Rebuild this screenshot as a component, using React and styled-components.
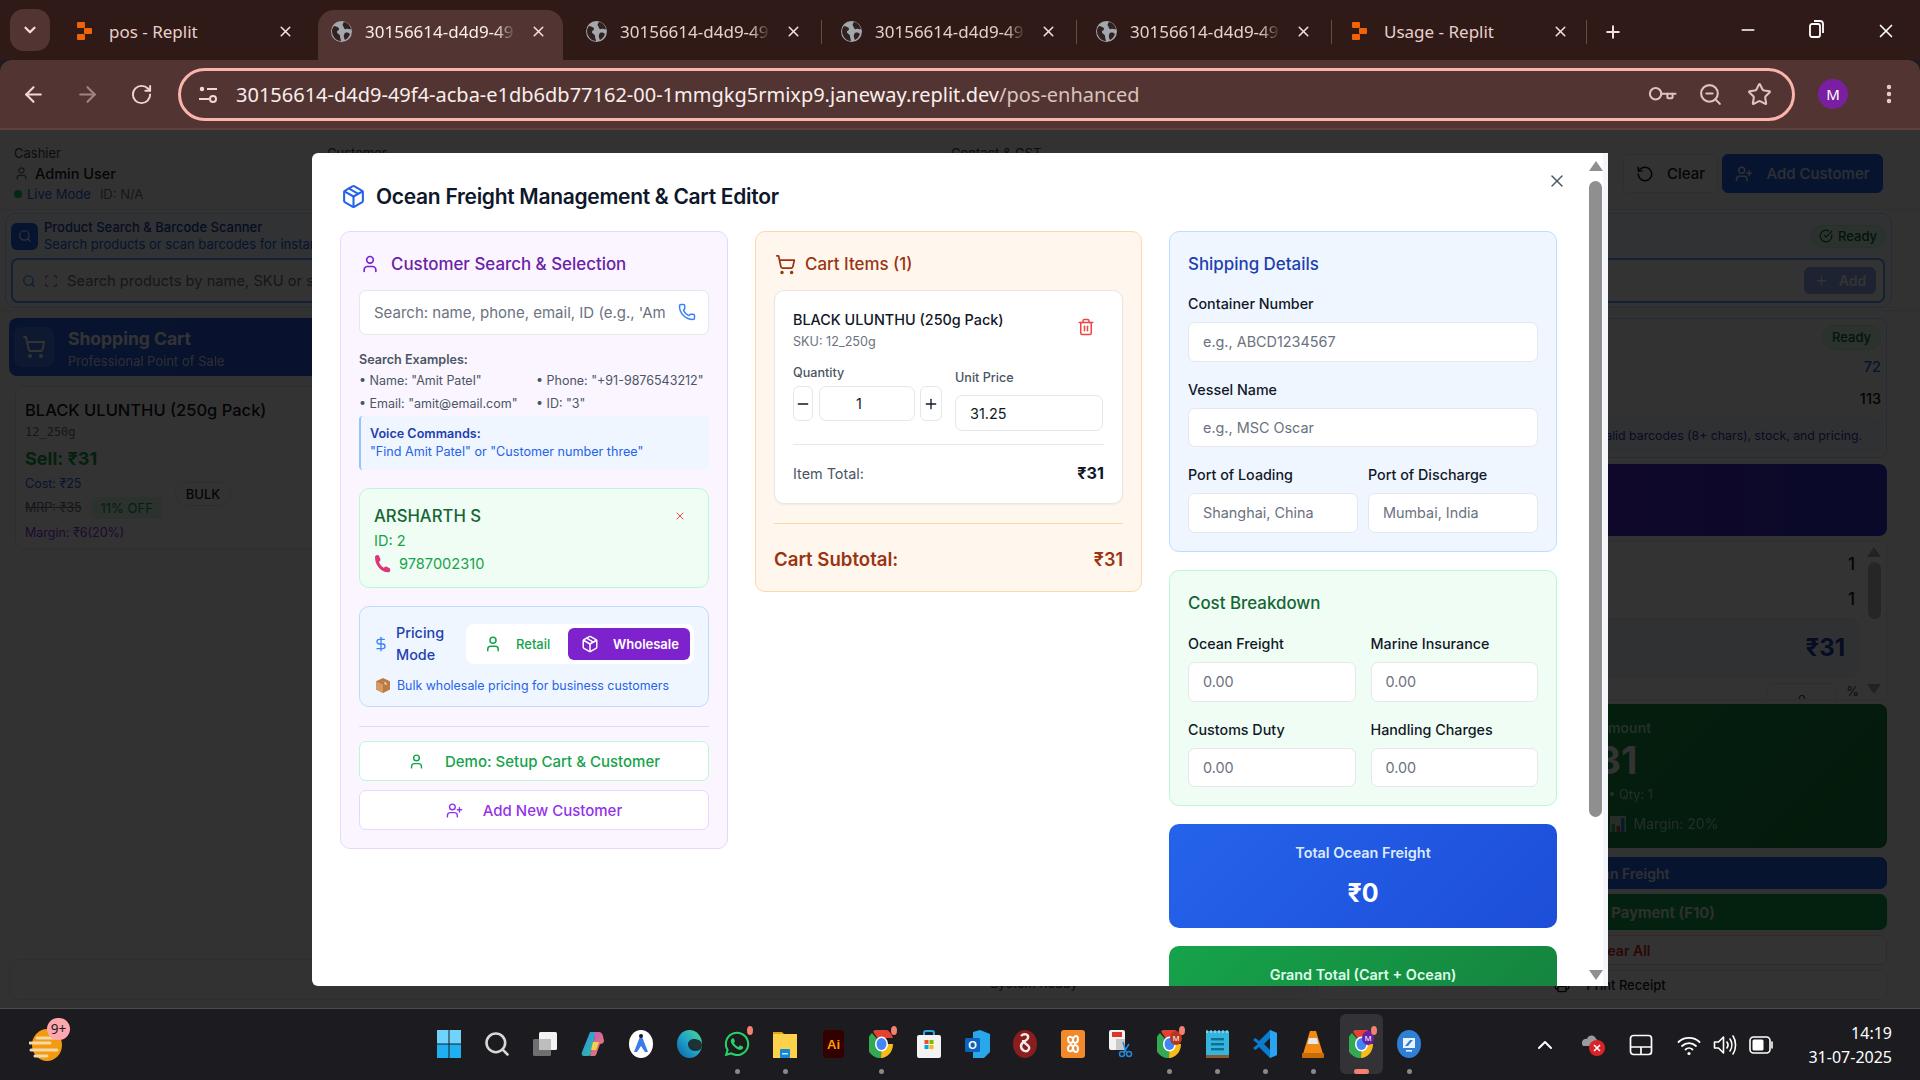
import React from 'react'
import styled, { createGlobalStyle } from 'styled-components'
import {
  ArrowLeft, ArrowRight, ChevronDown, CircleCheckBig, CreditCard, DollarSign, Key, Minus, MoreVertical, Package,
  Phone, Plus, Printer, RotateCcw, RotateCw, Scan, Search, ShoppingCart, Star, Trash2, User, UserPlus, X, ZoomOut,
} from 'lucide-react'
import { FaWhatsapp } from 'react-icons/fa'

const GlobalStyle = createGlobalStyle`
  html, body { margin: 0; padding: 0; width: 1920px; height: 1080px; overflow: hidden; background: #1c1b20; }
  * { box-sizing: border-box; }
  body { font-family: Inter, "Liberation Sans", sans-serif; }
`

const tones = {
  purple: { bg: '#faf5ff', border: '#e9d5ff', title: '#6b21a8' },
  orange: { bg: '#fff7ed', border: '#fed7aa', title: '#9a3412' },
  blue: { bg: '#eff6ff', border: '#bfdbfe', title: '#1e40af' },
  green: { bg: '#f0fdf4', border: '#bbf7d0', title: '#166534' },
}

const Screen = styled.div`
  width: 1920px;
  height: 1080px;
  display: flex;
  flex-direction: column;
`

/* ---------- browser chrome ---------- */
const TabStrip = styled.div`
  height: 60px;
  flex: none;
  background: #2f1a17;
  display: flex;
  align-items: flex-end;
  padding-left: 10px;
  font-family: "Noto Sans", "Open Sans", sans-serif;
`
const TabSearch = styled.div`
  width: 40px;
  height: 42px;
  margin: 0 13px 9px 0;
  border-radius: 14px;
  background: #523533;
  color: #f4dedb;
  display: flex;
  align-items: center;
  justify-content: center;
`
const Tab = styled.div`
  position: relative;
  width: 255px;
  height: 50px;
  flex: none;
  display: flex;
  align-items: center;
  padding: 0 10px 8px 13px;
  color: ${p => (p.$active ? '#fbeeec' : '#e8cfcb')};
  background: ${p => (p.$active ? '#523533' : 'transparent')};
  border-radius: 16px 16px 0 0;
  ${p => p.$active && 'width: 245px; margin-right: 10px;'}
  ${p => p.$sep && `
    &::after {
      content: '';
      position: absolute;
      right: 6px;
      top: 10px;
      height: 24px;
      width: 1.5px;
      background: #6a4b48;
    }
  `}
`
const TabTitle = styled.span`
  width: ${p => (p.$fade ? '151px' : '161px')};
  margin-left: ${p => (p.$fade ? '13px' : '17px')};
  font-size: 17px;
  white-space: nowrap;
  overflow: hidden;
  ${p => p.$fade && 'mask-image: linear-gradient(90deg, #000 86%, transparent);'}
`
const TabClose = styled.span`
  display: flex;
  margin-left: ${p => (p.$fade ? '14px' : '7px')};
  color: #f4dedb;
`
const NewTab = styled.div`
  margin: 0 0 18px 10px;
  color: #f4dedb;
  display: flex;
`
const WindowControls = styled.div`
  margin-left: auto;
  display: flex;
  color: #fff;
  padding-bottom: 18px;
`
const WindowButton = styled.div`
  width: 69px;
  display: flex;
  justify-content: center;
`
const Toolbar = styled.div`
  height: 70px;
  flex: none;
  background: #523533;
  border-radius: 12px 12px 0 0;
  border-bottom: 2px solid #5f4240;
  display: flex;
  align-items: center;
  padding: 0 19px 0 0;
  font-family: "Noto Sans", "Open Sans", sans-serif;
`
const NavButton = styled.div`
  width: 54px;
  display: flex;
  justify-content: center;
  color: ${p => (p.$off ? '#a08683' : '#f0d8d5')};
  &:first-child { margin-left: 6px; }
`
const AddressBar = styled.div`
  width: 1617px;
  height: 53px;
  margin-left: 10px;
  border: 3px solid #fbb4ab;
  border-radius: 27px;
  display: flex;
  align-items: center;
  padding: 0 8px 0 17px;
  color: #f0d8d5;
`
const Url = styled.div`
  margin-left: 18px;
  font-size: 20px;
  color: #faeeec;
  white-space: nowrap;
  flex: 1;
  span { color: #d9c2be; }
`
const BarIcon = styled.div`
  width: 49px;
  display: flex;
  justify-content: center;
  color: #dcc5c1;
`
const Avatar = styled.div`
  width: 30px;
  height: 30px;
  margin-left: 23px;
  border-radius: 50%;
  background: #7b1fa2;
  color: #fff;
  font-size: 15px;
  display: flex;
  align-items: center;
  justify-content: center;
`
const MenuDots = styled.div`
  margin-left: auto;
  display: flex;
  color: #e8cfcb;
`

/* ---------- dimmed POS page ---------- */
const Viewport = styled.div`
  position: relative;
  flex: 1;
  min-height: 0;
  overflow: hidden;
`
const Page = styled.div`
  height: 100%;
  background: #fbfbfc;
  display: flex;
  flex-direction: column;
  overflow: hidden;
`
const TopBar = styled.div`
  height: 80px;
  flex: none;
  display: flex;
  border-bottom: 1px solid #e5e7eb;
  padding: 15px 37px 0 14px;
  font-size: 13px;
  color: #374151;
`
const TopCell = styled.div`
  width: ${p => p.$w}px;
  flex: none;
`
const CashierName = styled.div`
  display: flex;
  align-items: center;
  gap: 6px;
  margin: 4px 0 4px;
  font-size: 14.5px;
  font-weight: 500;
  color: #111827;
  svg { color: #6b7280; }
`
const LiveRow = styled.div`
  display: flex;
  align-items: center;
  font-size: 13px;
  color: #6b7280;
`
const LiveDot = styled.i`
  width: 8px;
  height: 8px;
  border-radius: 50%;
  background: #22c55e;
  margin-right: 5px;
`
const LiveText = styled.span`
  color: #2563eb;
  margin-right: 9px;
`
const TopActions = styled.div`
  margin-left: auto;
  margin-top: 9px;
  display: flex;
  gap: 4px;
  height: 39px;
`
const TopButton = styled.div`
  display: flex;
  align-items: center;
  justify-content: center;
  gap: 13px;
  width: ${p => p.$w}px;
  border-radius: 6px;
  font-size: 15px;
  font-weight: 500;
  color: ${p => (p.$primary ? '#e5edff' : '#111827')};
  background: ${p => (p.$primary ? '#2563eb' : '#fff')};
  border: 1px solid ${p => (p.$primary ? '#2563eb' : '#e5e7eb')};
`
const ScannerPanel = styled.div`
  height: 95px;
  flex: none;
  margin: 3px 28px 0 5px;
  padding: 8px 6px 5px 5px;
  border: 1px solid #bfdbfe;
  border-radius: 10px;
  background: #f3f8ff;
`
const ScannerHead = styled.div`
  display: flex;
  align-items: center;
  height: 28px;
`
const ScannerIcon = styled.div`
  width: 27px;
  height: 27px;
  border-radius: 6px;
  background: #2563eb;
  color: #fff;
  display: flex;
  align-items: center;
  justify-content: center;
  margin-right: 6px;
`
const ScannerTitle = styled.div`
  font-size: 13px;
  line-height: 17px;
  font-weight: 500;
  color: #1e40af;
  small { display: block; font-size: 13px; font-weight: 400; color: #2563eb; }
`
const ReadyPill = styled.div`
  display: flex;
  align-items: center;
  gap: 5px;
  margin-left: auto;
  height: ${p => (p.$tall ? '25px' : '23px')};
  padding: 0 ${p => (p.$tall ? '9px' : '7px')};
  border-radius: 13px;
  font-size: 13px;
  font-weight: 500;
  color: #166534;
  background: #dcfce7;
  border: 1px solid #bbf7d0;
`
const ScannerInput = styled.div`
  height: 45px;
  margin-top: 8px;
  border: 2px solid #60a5fa;
  border-radius: 7px;
  background: #fff;
  display: flex;
  align-items: center;
  padding: 0 7px 0 9px;
  color: #6b7280;
  font-size: 14.7px;
  gap: 8px;
`
const ScannerHint = styled.span`
  margin-left: 1px;
`
const AddPill = styled.div`
  margin-left: auto;
  width: 72px;
  height: 27px;
  border-radius: 6px;
  background: #93aef5;
  color: #fff;
  font-size: 14px;
  font-weight: 600;
  display: flex;
  align-items: center;
  justify-content: center;
  gap: 10px;
`
const MainRow = styled.div`
  flex: 1;
  min-height: 0;
  margin-top: 2px;
  border-top: 1px solid #e5e7eb;
  padding: 7px 33px 8px 9px;
  display: grid;
  grid-template-columns: 1298px 570px;
  gap: 10px;
`
const Column = styled.div`
  display: flex;
  flex-direction: column;
  min-height: 0;
`
const CartBanner = styled.div`
  height: 58px;
  flex: none;
  border-radius: 8px;
  background: linear-gradient(90deg, #2563eb, #4338ca);
  color: #fff;
  display: flex;
  align-items: center;
  padding-left: 5px;
  gap: 14px;
`
const BannerIcon = styled.div`
  width: 40px;
  height: 40px;
  border-radius: 8px;
  background: rgba(255, 255, 255, 0.15);
  display: flex;
  align-items: center;
  justify-content: center;
`
const BannerText = styled.div`
  padding-top: 2px;
  font-size: 17.5px;
  font-weight: 700;
  small { display: block; font-size: 13px; font-weight: 400; opacity: 0.85; margin-top: 4px; }
`
const ProductCard = styled.div`
  height: 163px;
  flex: none;
  margin: 10px 0 0 6px;
  padding: 12px 9px;
  border: 1px solid #e5e7eb;
  border-radius: 8px;
  background: #fff;
  position: relative;
`
const ProductName = styled.div`
  font-size: 16.5px;
  line-height: 22px;
  font-weight: 500;
  color: #111827;
`
const ProductSku = styled.div`
  font-family: "DejaVu Sans Mono", monospace;
  font-size: 12px;
  line-height: 22px;
  color: #6b7280;
`
const SellPrice = styled.div`
  font-size: 18px;
  line-height: 25px;
  margin-top: 3px;
  font-weight: 700;
  color: #16a34a;
`
const ProductLine = styled.div`
  display: flex;
  align-items: center;
  gap: 10px;
  height: 24.5px;
  font-size: 12.5px;
  color: ${p => p.$color || '#6b7280'};
  s { color: #6b7280; }
`
const OffBadge = styled.span`
  height: 22px;
  display: flex;
  align-items: center;
  padding: 0 9px;
  font-size: 13px;
  border-radius: 4px;
  color: #16a34a;
  background: #dcfce7;
`
const BulkBadge = styled.div`
  position: absolute;
  left: 159px;
  top: 95px;
  width: 56px;
  height: 24px;
  border: 1px solid #e5e7eb;
  border-radius: 12px;
  display: flex;
  align-items: center;
  justify-content: center;
  font-size: 13px;
  font-weight: 500;
  color: #111827;
`
const StatusStrip = styled.div`
  margin-top: auto;
  height: 41px;
  flex: none;
  border: 1px solid #e5e7eb;
  border-radius: 8px;
  font-size: 13px;
  color: #374151;
  padding: 15px 0 0 980px;
`
const StatsPanel = styled.div`
  height: 140px;
  flex: none;
  padding: 5px 5px 4px;
  border: 1px solid #bfdbfe;
  border-radius: 8px;
  background: #f8fbff;
`
const StatLine = styled.div`
  height: ${p => p.$h || 32}px;
  display: flex;
  align-items: center;
  justify-content: flex-end;
  font-size: 14.5px;
  font-weight: 500;
  color: ${p => p.$color};
`
const StatsNote = styled.div`
  height: 35px;
  margin-top: 4px;
  border-radius: 6px;
  background: #eff6ff;
  font-size: 12.3px;
  color: #1e40af;
  display: flex;
  align-items: center;
  justify-content: flex-end;
  padding-right: 19px;
  white-space: nowrap;
`
const GradientBanner = styled.div`
  height: 72px;
  flex: none;
  margin-top: 6px;
  border-radius: 8px;
  background: linear-gradient(90deg, #6d28d9, #312ecb);
`
const ItemsPanel = styled.div`
  height: 159px;
  flex: none;
  margin-top: 5px;
  position: relative;
  overflow: hidden;
  border: 1px solid #e5e7eb;
  border-radius: 6px 6px 0 0;
  background: #fff;
  padding: 4px 27px 0 0;
`
const CountLine = styled.div`
  height: 35px;
  display: flex;
  align-items: center;
  justify-content: flex-end;
  padding-right: 4px;
  font-size: 17px;
  font-weight: 500;
  color: #111827;
`
const TotalBox = styled.div`
  height: 59px;
  margin-top: 2px;
  border-radius: 8px;
  border: 1px solid #dbeafe;
  background: #eff6ff;
  display: flex;
  align-items: center;
  justify-content: flex-end;
  padding-right: 13px;
  font-size: 24px;
  font-weight: 700;
  color: #1e40af;
`
const DiscountRow = styled.div`
  display: flex;
  justify-content: flex-end;
  margin-top: 6px;
  font-size: 13px;
  color: #374151;
  gap: 9px;
`
const DiscountBox = styled.div`
  width: 71px;
  height: 30px;
  border: 1px solid #e5e7eb;
  border-radius: 6px;
  text-align: center;
  padding-top: 8px;
`
const MiniRail = styled.div`
  position: absolute;
  right: 5px;
  top: 5px;
  bottom: 5px;
  width: 14px;
  display: flex;
  flex-direction: column;
  align-items: center;
  gap: 5px;
`
const MiniThumb = styled.div`
  width: 13px;
  height: 57px;
  margin-bottom: auto;
  border-radius: 7px;
  background: #bdbdbd;
`
const Arrow = styled.div`
  width: 14px;
  height: 10px;
  flex: none;
  background: ${p => p.$color || '#8f8f8f'};
  clip-path: ${p => (p.$down ? 'polygon(0 0, 100% 0, 50% 100%)' : 'polygon(50% 0, 100% 100%, 0 100%)')};
`
const AmountBox = styled.div`
  height: 144px;
  flex: none;
  margin-top: 4px;
  border-radius: 8px;
  background: linear-gradient(135deg, #16a34a, #15803d);
  color: #d1fae5;
  text-align: center;
  padding: 15px 0 0 8px;
  font-size: 14px;
`
const AmountTitle = styled.div`
  font-weight: 600;
  line-height: 18px;
  opacity: 0.85;
`
const AmountValue = styled.div`
  font-size: 38px;
  line-height: 46px;
  font-weight: 700;
  color: #fff;
`
const AmountLine = styled.div`
  margin-top: 2px;
  line-height: 20px;
  font-size: 12.8px;
  opacity: 0.85;
`
const AmountMargin = styled.div`
  margin-top: 10px;
  display: flex;
  justify-content: center;
  align-items: center;
  gap: 8px;
  font-size: 14px;
  opacity: 0.8;
  color: #d1fae5;
`
const AmountProfit = styled.span`
  width: 108px;
`
const ActionButton = styled.div`
  height: ${p => p.$h}px;
  flex: none;
  margin-top: ${p => p.$mt}px;
  padding-left: ${p => p.$pl || 0}px;
  border-radius: 7px;
  display: flex;
  align-items: center;
  justify-content: center;
  font-size: ${p => p.$fs || 14}px;
  font-weight: ${p => p.$weight || 600};
  color: ${p => p.$color};
  background: ${p => p.$bg};
  border: 1px solid ${p => p.$line || p.$bg};
  gap: ${p => p.$gap || 8}px;
`

const Scrim = styled.div`
  position: absolute;
  inset: 0;
  background: rgba(0, 0, 0, 0.8);
`

/* ---------- modal ---------- */
const Modal = styled.div`
  position: absolute;
  left: 312px;
  top: 23px;
  width: 1296px;
  height: 833px;
  background: #fff;
  border-radius: 6px 0 0 6px;
  display: flex;
  overflow: hidden;
`
const ModalBody = styled.div`
  flex: 1;
  min-width: 0;
  overflow: hidden;
  padding: 30px 32px 0 28px;
`
const ModalTitle = styled.h2`
  margin: 0 0 22px;
  height: 26px;
  padding-top: 1px;
  display: flex;
  align-items: center;
  gap: 10px;
  font-size: 21px;
  font-weight: 600;
  letter-spacing: -0.3px;
  color: #0f172a;
  svg { color: #2563eb; margin-left: 1px; }
`
const CloseButton = styled.div`
  position: absolute;
  right: 41px;
  top: 18px;
  color: #4b5563;
  display: flex;
`
const Columns = styled.div`
  display: grid;
  grid-template-columns: 388px 387px 388px;
  gap: 27px;
  align-items: start;
`
const Stack = styled.div`
  display: flex;
  flex-direction: column;
  gap: 18px;
`
const Panel = styled.section`
  padding: 18px;
  border: 1px solid ${p => tones[p.$tone].border};
  border-radius: 10px;
  background: ${p => tones[p.$tone].bg};
`
const PanelHeading = styled.div`
  height: 26px;
  padding-top: 2px;
  display: flex;
  align-items: center;
  gap: ${p => p.$gap || 0}px;
  font-size: 16.9px;
  font-weight: 500;
  color: ${p => tones[p.$tone].title};
  svg { margin-left: 1px; }
`
const TextField = styled.input`
  display: block;
  width: 100%;
  height: ${p => p.$h || 40}px;
  padding: 0 ${p => p.$pr || 14}px 0 14px;
  border: 1px solid #e5e7eb;
  border-radius: 7px;
  background: #fff;
  outline: none;
  font: 400 ${p => p.$fs || 14.4}px Inter, "Liberation Sans", sans-serif;
  color: #111827;
  text-align: ${p => p.$align || 'left'};
  &::placeholder { color: #6b7280; opacity: 1; }
`
const SearchWrap = styled.div`
  position: relative;
  margin-top: 14px;
  svg {
    position: absolute;
    right: 13px;
    top: 13px;
    color: #3b82f6;
  }
`
const ExamplesTitle = styled.div`
  margin-top: 16px;
  height: 18px;
  line-height: 18px;
  font-size: 12.6px;
  font-weight: 600;
  color: #4b5563;
`
const ExamplesGrid = styled.div`
  display: grid;
  grid-template-columns: 177px 1fr;
  grid-auto-rows: 23px;
  align-items: center;
  font-size: 12.5px;
  color: #4b5563;
  white-space: nowrap;
`
const VoiceBox = styled.div`
  margin-top: 1px;
  padding: 9px 11px 9px 9px;
  border-left: 2px solid #93c5fd;
  border-radius: 4px;
  background: #eff6ff;
  font-size: 12.6px;
  line-height: 18px;
  color: #2563eb;
  strong { display: block; font-weight: 600; color: #1e40af; }
`
const CustomerCard = styled.div`
  position: relative;
  height: 100px;
  margin-top: 18px;
  padding: 14px 14px;
  border: 1px solid #bbf7d0;
  border-radius: 10px;
  background: #f0fdf4;
  color: #16a34a;
  font-size: 14.6px;
`
const CustomerName = styled.div`
  height: 26px;
  line-height: 26px;
  font-size: 16.7px;
  font-weight: 500;
  color: #166534;
`
const CustomerLine = styled.div`
  display: flex;
  align-items: center;
  gap: 8px;
  height: ${p => p.$h}px;
`
const RemoveButton = styled.div`
  position: absolute;
  right: 22px;
  top: 21px;
  color: #ef4444;
  display: flex;
`
const PricingBox = styled.div`
  height: 101px;
  margin-top: 18px;
  padding: 15px 14px 0 13px;
  border: 1px solid #bfdbfe;
  border-radius: 10px;
  background: #eff6ff;
`
const PricingRow = styled.div`
  display: flex;
  align-items: center;
  svg { flex: none; color: #3b82f6; }
`
const PricingLabel = styled.div`
  width: 70px;
  margin-left: 7px;
  font-size: 14.4px;
  line-height: 22px;
  font-weight: 500;
  color: #1e40af;
`
const Toggle = styled.div`
  width: 228px;
  height: 40px;
  padding: 4px;
  display: flex;
  border-radius: 8px;
  background: #fff;
`
const ToggleOption = styled.div`
  width: ${p => (p.$active ? 122 : 98)}px;
  display: flex;
  align-items: center;
  gap: 14px;
  padding-left: ${p => (p.$active ? 13 : 14)}px;
  border-radius: 6px;
  font-size: 13px;
  font-weight: ${p => (p.$active ? 600 : 500)};
  color: ${p => (p.$active ? '#fff' : '#16a34a')};
  background: ${p => (p.$active ? '#7e22ce' : 'transparent')};
  svg { color: inherit; }
`
const PricingNote = styled.div`
  margin-top: 9px;
  height: 20px;
  display: flex;
  align-items: center;
  gap: 7px;
  padding-left: 3px;
  font-size: 12.4px;
  color: #2563eb;
  svg { flex: none; }
`
const PanelDivider = styled.div`
  height: 1px;
  background: ${p => tones[p.$tone].border};
  margin-top: ${p => p.$mt}px;
`
const OutlineButton = styled.div`
  height: 40px;
  margin-top: ${p => p.$mt}px;
  display: flex;
  align-items: center;
  justify-content: center;
  gap: 20px;
  border: 1px solid ${p => tones[p.$tone].border};
  border-radius: 7px;
  background: #fff;
  font-size: 15px;
  font-weight: 500;
  color: ${p => (p.$tone === 'green' ? '#16a34a' : '#9333ea')};
`
const ItemCard = styled.div`
  margin-top: 14px;
  padding: 18px;
  border: 1px solid #e5e7eb;
  border-radius: 10px;
  background: #fff;
  box-shadow: 0 1px 2px rgba(0, 0, 0, 0.05);
`
const ItemHead = styled.div`
  display: flex;
  justify-content: space-between;
  align-items: flex-start;
`
const ItemName = styled.div`
  height: 22px;
  line-height: 22px;
  font-size: 14.4px;
  font-weight: 500;
  color: #111827;
`
const ItemSku = styled.div`
  height: 22px;
  line-height: 22px;
  font-size: 12.6px;
  color: #6b7280;
`
const TrashButton = styled.div`
  margin: 9px 9px 0 0;
  color: #ef4444;
  display: flex;
`
const ItemGrid = styled.div`
  margin-top: 11px;
  display: grid;
  grid-template-columns: 149px 148px;
  gap: 13px;
`
const SmallLabel = styled.div`
  height: 18px;
  line-height: 18px;
  font-size: 12.6px;
  font-weight: 500;
  color: #4b5563;
`
const QtyRow = styled.div`
  margin-top: 4px;
  display: flex;
  gap: 5.5px;
  height: 35px;
`
const QtyButton = styled.div`
  width: ${p => p.$w}px;
  flex: none;
  display: flex;
  align-items: center;
  justify-content: center;
  border: 1px solid #e5e7eb;
  border-radius: 6px;
  color: #111827;
`
const PriceCell = styled.div`
  padding-top: 5px;
  input { margin-top: 8px; }
`
const ItemDivider = styled.div`
  height: 1px;
  margin-top: 13px;
  background: #e5e7eb;
`
const ItemTotal = styled.div`
  margin-top: 16px;
  height: 24px;
  display: flex;
  align-items: center;
  justify-content: space-between;
  font-size: 14.4px;
  color: #4b5563;
  b { font-size: 16.2px; font-weight: 700; color: #111827; }
`
const Subtotal = styled.div`
  margin-top: 21px;
  height: 28px;
  display: flex;
  align-items: center;
  justify-content: space-between;
  font-size: 18.6px;
  font-weight: 600;
  color: #9a3412;
  span { font-size: 18px; }
`
const FieldLabel = styled.label`
  display: block;
  margin-top: ${p => p.$mt || 0}px;
  margin-bottom: 8px;
  height: 20px;
  line-height: 20px;
  font-size: 14.3px;
  font-weight: 500;
  color: #111827;
`
const FieldGrid = styled.div`
  margin-top: ${p => p.$mt}px;
  display: grid;
  grid-template-columns: 1fr 1fr;
  column-gap: ${p => p.$gap}px;
`
const TotalCard = styled.div`
  height: ${p => p.$h}px;
  flex: none;
  padding-top: 18px;
  border-radius: 10px;
  text-align: center;
  background: ${p => p.$bg};
`
const TotalLabel = styled.div`
  height: 22px;
  line-height: 22px;
  font-size: 14.4px;
  font-weight: 600;
  color: ${p => p.$color};
`
const TotalValue = styled.div`
  margin-top: 11px;
  height: 36px;
  line-height: 36px;
  font-size: 25px;
  font-weight: 700;
  color: #fff;
`
const ScrollRail = styled.div`
  width: 19px;
  flex: none;
  padding: 8px 0 6px;
  display: flex;
  flex-direction: column;
  background: #fff;
  border-right: 5px solid #f4f6fb;
`
const ScrollThumb = styled.div`
  width: 13px;
  height: 636px;
  margin: 10px 0 auto;
  border-radius: 7px;
  background: #8f8f8f;
`

/* ---------- windows taskbar ---------- */
const Taskbar = styled.div`
  height: 72px;
  flex: none;
  display: flex;
  align-items: stretch;
  background: #1c1b20;
  border-top: 1px solid #4a4a4c;
  font-family: "Noto Sans", "Open Sans", sans-serif;
`
const WidgetSlot = styled.div`
  position: relative;
  width: 425px;
  flex: none;
  display: flex;
  align-items: center;
  padding-left: 29px;
`
const CountBadge = styled.div`
  position: absolute;
  left: 47px;
  top: 9px;
  width: 23px;
  height: 22px;
  border-radius: 11px;
  background: #ffa7ae;
  color: #1c1b20;
  font-size: 13.5px;
  text-align: center;
  line-height: 22px;
`
const AppSlot = styled.div`
  position: relative;
  width: 48px;
  flex: none;
  display: flex;
  align-items: center;
  justify-content: center;
  padding-bottom: 1px;
  ${p => p.$active && `
    &::before {
      content: '';
      position: absolute;
      left: 3px;
      right: 2px;
      top: 5px;
      bottom: 6px;
      border-radius: 6px;
      background: #333236;
    }
  `}
  svg { position: relative; }
`
const AppDot = styled.i`
  position: absolute;
  left: ${p => (p.$active ? 17 : 22)}px;
  bottom: 6px;
  width: ${p => (p.$active ? 15 : 5)}px;
  height: 5px;
  border-radius: 3px;
  background: ${p => (p.$active ? '#f4816f' : '#8a8a8d')};
`
const NotifyDot = styled.i`
  position: absolute;
  right: 8px;
  top: 17px;
  width: 6px;
  height: 9px;
  border-radius: 50%;
  background: #f4816f;
`
const Tray = styled.div`
  margin-left: auto;
  display: flex;
  align-items: center;
  color: #fff;
  padding-right: 28px;
`
const TraySlot = styled.div`
  width: ${p => p.$w}px;
  flex: none;
  display: flex;
  justify-content: center;
  ${p => p.$gap && 'margin-left: 6px;'}
`
const Clock = styled.div`
  width: 113px;
  text-align: right;
  font-size: 16px;
  line-height: 24px;
  color: #fff;
`

/* ---------- small drawings ---------- */
const ReplitIcon = () => (
  <svg width="16" height="18" viewBox="0 0 16 18" fill="#f26207">
    <rect x="1" y="0" width="8" height="6" rx="1" />
    <rect x="8" y="6" width="8" height="6" rx="1" />
    <rect x="1" y="12" width="8" height="6" rx="1" />
  </svg>
)
const GlobeIcon = () => (
  <svg width="21" height="21" viewBox="0 0 21 21">
    <circle cx="10.5" cy="10.5" r="10.5" fill="#a3a8ad" />
    <path d="M3 5c3 1 5 1 5 3s-2 1-2 3 3 2 3 4 1 4 1 5C5 20 1 15 1 10c0-2 1-4 2-5ZM13 1c3 0 6 3 7 7-2 1-3-1-5 0s-2-2-3-3 0-3 1-4ZM14 12c2-1 4 0 5 1-1 3-3 5-5 6-1-2-2-5 0-7Z" fill="#332020" />
  </svg>
)
const TuneIcon = () => (
  <svg width="20" height="20" viewBox="0 0 20 20" fill="none" stroke="currentColor" strokeWidth="2">
    <circle cx="4" cy="5" r="1.2" fill="currentColor" />
    <path d="M9 5h10M1 15h10" />
    <circle cx="15" cy="15" r="3" />
  </svg>
)
const RestoreIcon = () => (
  <svg width="16" height="18" viewBox="0 0 16 18" fill="none" stroke="#fff" strokeWidth="1.8">
    <rect x="1" y="4" width="10" height="13" rx="2" />
    <path d="M5 1h6a3 3 0 0 1 3 3v9" />
  </svg>
)
const ParcelEmoji = () => (
  <svg width="14" height="15" viewBox="0 0 14 15">
    <path d="M7 0l7 3.2v8.3L7 15 0 11.5V3.2z" fill="#b97a45" />
    <path d="M7 6.5V15L0 11.5V3.2z" fill="#d69a63" />
    <path d="M3.5 1.6L10.5 4.8v2.4l-2-1V4z" fill="#ecd3ad" />
  </svg>
)
const PhoneEmoji = () => (
  <svg width="17" height="18" viewBox="0 0 17 18">
    <path d="M1 2C1 1 2 0 3 0l2 .5 1.600 4.500L5 7c1 2.500 2.500 4.500 4.800 5.800l2-1.600 4.200 2.300.2 2c0 1-.8 1.800-1.800 1.800C7 17.500.8 10 1 2Z" fill="#e0357a" />
  </svg>
)
const ChartEmoji = () => (
  <svg width="16" height="16" viewBox="0 0 16 16">
    <rect width="16" height="16" fill="#f4f4f4" />
    <rect x="1.500" y="8" width="3.500" height="8" fill="#4caf50" />
    <rect x="6.500" y="10" width="3.500" height="6" fill="#e53935" />
    <rect x="11" y="2" width="3.500" height="14" fill="#1e88e5" />
  </svg>
)
const WindowsLogo = () => (
  <svg width="24" height="28" viewBox="0 0 24 28">
    <rect width="11.500" height="13.500" fill="#6fd3fb" />
    <rect x="12.500" width="11.500" height="13.500" fill="#6fd3fb" />
    <rect y="14.500" width="11.500" height="13.500" fill="#1fb0f2" />
    <rect x="12.500" y="14.500" width="11.500" height="13.500" fill="#1fb0f2" />
  </svg>
)
const TaskView = () => (
  <svg width="24" height="24" viewBox="0 0 24 24">
    <rect x="6" width="18" height="18" rx="1.500" fill="#f2f2f2" />
    <rect y="7" width="18" height="17" rx="1.500" fill="#6f6f6f" />
    <rect x="6" y="7" width="12" height="11" fill="#bdbdbd" />
  </svg>
)
const Copilot = () => (
  <svg width="24" height="26" viewBox="0 0 24 26">
    <defs>
      <linearGradient id="cpa" x1="0" y1="0" x2="1" y2="1"><stop offset="0" stopColor="#2e8df5" /><stop offset="1" stopColor="#32c28f" /></linearGradient>
      <linearGradient id="cpb" x1="0" y1="0" x2="1" y2="1"><stop offset="0" stopColor="#c04fd8" /><stop offset="1" stopColor="#f2884c" /></linearGradient>
    </defs>
    <path d="M9 1h6l-5 21a3 3 0 0 1-3 3H3C1 25 0 23 1 21Z" fill="url(#cpa)" />
    <path d="M13 1h5c2 0 3 1 4 4l1 5c0 2-2 3-4 3l-4 11c-1 1-2 1-3 1h-3l5-20Z" fill="url(#cpb)" />
    <path d="M12 11h6l-3 8h-5z" fill="#f5d04c" />
  </svg>
)
const CircleApp = () => (
  <svg width="24" height="28" viewBox="0 0 24 28">
    <ellipse cx="12" cy="14" rx="12" ry="14" fill="#fff" />
    <path d="M12 4l7 18h-3l-4-6-4 6H5z" fill="#3a7bea" />
    <circle cx="12" cy="6" r="2" fill="#1c1b20" />
  </svg>
)
const Edge = () => (
  <svg width="25" height="28" viewBox="0 0 25 28">
    <defs>
      <linearGradient id="eg" x1="1" y1="0" x2="0" y2="1"><stop offset="0" stopColor="#52d88a" /><stop offset="0.5" stopColor="#1fa6c9" /><stop offset="1" stopColor="#0f5ea8" /></linearGradient>
    </defs>
    <ellipse cx="12.500" cy="14" rx="12.500" ry="14" fill="url(#eg)" />
    <path d="M25 15c0 5-4 6-7 6-4 0-7-3-7-7 0-3 3-5 6-5 4 0 8 2 8 6Z" fill="#1c1b20" opacity="0.85" />
  </svg>
)
const Folder = () => (
  <svg width="24" height="28" viewBox="0 0 24 28">
    <path d="M0 2h9l3 3H0z" fill="#e5a50a" />
    <rect y="4" width="24" height="24" fill="#fcd24d" />
    <rect x="7" y="19" width="10" height="9" rx="1" fill="#1488d8" />
    <rect x="9" y="23" width="6" height="1.500" fill="#bfe4ff" />
  </svg>
)
const AdobeAi = () => (
  <svg width="21" height="28" viewBox="0 0 21 28">
    <rect width="21" height="28" rx="3" fill="#330000" />
    <text x="10.500" y="19" fontSize="13" fontWeight="700" textAnchor="middle" fill="#ff9a00" fontFamily="Liberation Sans, sans-serif">Ai</text>
  </svg>
)
const Chrome = ({ badge }) => (
  <svg width="25" height="28" viewBox="0 0 25 28">
    <path d="M12.500 14 4 1.500A12.500 14 0 0 1 24 8H12.500Z" fill="#e34133" />
    <path d="M12.500 14 12 28A12.500 14 0 0 1 3 3Z" fill="#34a853" />
    <path d="M12.500 14H24A12.500 14 0 0 1 12 28Z" fill="#f6bd16" />
    <ellipse cx="12.500" cy="14" rx="6.500" ry="7.500" fill="#fff" />
    <ellipse cx="12.500" cy="14" rx="5" ry="6" fill="#4285f4" />
    {badge && <ellipse cx="19" cy="8" rx="6" ry="7" fill={badge} />}
    {badge && <text x="19" y="11" fontSize="8" textAnchor="middle" fill="#fff" fontFamily="Liberation Sans, sans-serif">M</text>}
  </svg>
)
const Store = () => (
  <svg width="24" height="28" viewBox="0 0 24 28">
    <path d="M7 6V3a2 2 0 0 1 2-2h6a2 2 0 0 1 2 2v3" stroke="#23a9ea" strokeWidth="2" fill="none" />
    <rect y="5" width="24" height="23" rx="2" fill="#f3f3f3" />
    <rect x="7.500" y="10" width="4" height="4" fill="#f25022" />
    <rect x="12.500" y="10" width="4" height="4" fill="#7fba00" />
    <rect x="7.500" y="15" width="4" height="4" fill="#00a4ef" />
    <rect x="12.500" y="15" width="4" height="4" fill="#ffb900" />
  </svg>
)
const Outlook = () => (
  <svg width="25" height="28" viewBox="0 0 25 28">
    <path d="M8 2 15 0l10 4v18l-6 6H8z" fill="#28a8ea" />
    <rect y="8" width="15" height="14" rx="1.500" fill="#0a64bc" />
    <text x="7.500" y="19" fontSize="11" fontWeight="700" textAnchor="middle" fill="#fff" fontFamily="Liberation Sans, sans-serif">O</text>
  </svg>
)
const CorelApp = () => (
  <svg width="24" height="28" viewBox="0 0 24 28">
    <ellipse cx="12" cy="14" rx="12" ry="14" fill="#8a1d1d" />
    <path d="M8 6c3-3 8-2 7 2s-7 3-7 8 6 7 8 3-6-5-6-9" stroke="#f4eaea" strokeWidth="2.400" fill="none" />
  </svg>
)
const Xampp = () => (
  <svg width="24" height="28" viewBox="0 0 24 28">
    <rect width="24" height="28" rx="3" fill="#f28a2c" />
    <path d="M7 9c0-3 5-3 5 1s5 4 5-1-5-3-5 1-5 4-5-1ZM7 19c0 3 5 3 5-1s5-4 5 1-5 3-5-1-5-4-5 1Z" stroke="#fff" strokeWidth="2" fill="none" />
  </svg>
)
const SnipTool = () => (
  <svg width="24" height="28" viewBox="0 0 24 28">
    <rect width="16" height="20" rx="2" fill="#f2f2f2" />
    <rect x="3" y="2" width="10" height="5" fill="#d9372c" />
    <rect x="7" y="9" width="9" height="11" fill="#c9c9c9" />
    <path d="M14 12l3 10M20 14l-5 8" stroke="#1f8bd8" strokeWidth="1.500" />
    <circle cx="13" cy="24" r="2.500" fill="none" stroke="#1f8bd8" strokeWidth="1.500" />
    <circle cx="20" cy="24" r="2.500" fill="none" stroke="#1f8bd8" strokeWidth="1.500" />
  </svg>
)
const Notepad = () => (
  <svg width="23" height="28" viewBox="0 0 23 28">
    <rect y="1" width="23" height="25" rx="1" fill="#35b4dd" />
    <rect y="25" width="23" height="3" fill="#8a5a2e" />
    <rect x="5" y="8" width="13" height="2.400" fill="#0d6f93" />
    <rect x="5" y="13" width="13" height="2.400" fill="#0d6f93" />
    <rect x="5" y="18" width="13" height="2.400" fill="#0d6f93" />
    <path d="M1 0v3M5 0v3M9 0v3M13 0v3M17 0v3M21 0v3" stroke="#cdeef9" />
  </svg>
)
const VsCode = () => (
  <svg width="24" height="28" viewBox="0 0 24 28">
    <path d="M17 0l7 3v22l-7 3L6 17l-3.500 3L0 18l5-4-5-4 2.500-2L6 11Z" fill="#0a7ccf" />
    <path d="M17 8l-6 6 6 6z" fill="#1c1b20" />
    <path d="M17 0l7 3v22l-7 3z" fill="#2aa3f0" />
  </svg>
)
const Vlc = () => (
  <svg width="22" height="28" viewBox="0 0 22 28">
    <path d="M8 1h6l7 23H1z" fill="#f08a12" />
    <path d="M7 8h8l1.500 6h-11z" fill="#e8e8e8" />
    <rect y="23" width="22" height="5" rx="1" fill="#c76a0a" />
  </svg>
)
const RemoteApp = () => (
  <svg width="24" height="28" viewBox="0 0 24 28">
    <ellipse cx="12" cy="14" rx="12" ry="14" fill="#2f7fd6" />
    <rect x="6" y="8" width="12" height="10" fill="#e9f3fc" />
    <path d="M8 16l5-6 3 0-5 6z" fill="#2f7fd6" />
    <rect x="9" y="20" width="6" height="1.600" fill="#e9f3fc" />
  </svg>
)
const WeatherIcon = () => (
  <svg width="34" height="32" viewBox="0 0 34 32">
    <ellipse cx="18" cy="16" rx="15" ry="16" fill="#f29a10" />
    <path d="M8 9h17M1 14h20M2 21h26M6 27h12" stroke="#f3d8a8" strokeWidth="3" strokeLinecap="round" />
  </svg>
)
const TouchPad = () => (
  <svg width="24" height="22" viewBox="0 0 24 22" fill="none" stroke="#fff" strokeWidth="1.700">
    <rect x="1.500" y="1.500" width="21" height="19" rx="3" />
    <path d="M1.500 13h21M12 13v7.500" />
  </svg>
)
const OneDriveOff = () => (
  <svg width="26" height="24" viewBox="0 0 26 24">
    <path d="M3 13c-3-4 1-8 4-7 2-5 8-4 9 0 2 0 2 3 0 7z" fill="#9b9b9b" />
    <circle cx="17" cy="15" r="8" fill="#d8232a" />
    <path d="M14 12l6 6M20 12l-6 6" stroke="#fff" strokeWidth="1.600" />
  </svg>
)
const Wifi = () => (
  <svg width="24" height="22" viewBox="0 0 24 22" fill="none" stroke="#fff" strokeWidth="1.800" strokeLinecap="round">
    <path d="M1.500 8C7 2.500 17 2.500 22.500 8M5 12c4-3.800 10-3.800 14 0M8.500 15.500c2-1.800 5-1.800 7 0" />
    <circle cx="12" cy="19.500" r="1.600" fill="#fff" stroke="none" />
  </svg>
)
const Volume = () => (
  <svg width="24" height="22" viewBox="0 0 24 22" fill="none" stroke="#fff" strokeWidth="1.600" strokeLinecap="round" strokeLinejoin="round">
    <path d="M1.500 8h4l5-5v16l-5-5h-4z" />
    <path d="M14 8c1.200 1.700 1.200 4.300 0 6M17 5c2.400 3.500 2.400 8.500 0 12M20 2c3.400 5 3.400 13 0 18" />
  </svg>
)
const Battery = () => (
  <svg width="24" height="20" viewBox="0 0 24 20" fill="none" stroke="#fff" strokeWidth="1.600">
    <rect x="1" y="2" width="20" height="16" rx="3.500" />
    <rect x="3.500" y="4.500" width="11" height="11" rx="1.500" fill="#fff" stroke="none" />
    <path d="M23 7v6" strokeLinecap="round" />
  </svg>
)

const tabs = [
  { title: 'pos - Replit', replit: true },
  { title: '30156614-d4d9-49', active: true },
  { title: '30156614-d4d9-49', sep: true },
  { title: '30156614-d4d9-49', sep: true },
  { title: '30156614-d4d9-49', sep: true },
  { title: 'Usage - Replit', replit: true, sep: true },
]

const taskApps = [
  { icon: <WindowsLogo /> },
  { icon: <Search size={28} color="#d8d8d8" strokeWidth={2.2} /> },
  { icon: <TaskView /> },
  { icon: <Copilot /> },
  { icon: <CircleApp /> },
  { icon: <Edge /> },
  { icon: <FaWhatsapp size={28} color="#25d366" />, dot: true, notify: true },
  { icon: <Folder />, dot: true },
  { icon: <AdobeAi /> },
  { icon: <Chrome />, dot: true, notify: true },
  { icon: <Store /> },
  { icon: <Outlook /> },
  { icon: <CorelApp /> },
  { icon: <Xampp /> },
  { icon: <SnipTool /> },
  { icon: <Chrome badge="#b5371f" />, dot: true, notify: true },
  { icon: <Notepad />, dot: true },
  { icon: <VsCode />, dot: true },
  { icon: <Vlc />, dot: true },
  { icon: <Chrome badge="#6a1fa8" />, active: true, notify: true },
  { icon: <RemoteApp />, dot: true },
]

function BrowserChrome() {
  return (
    <>
      <TabStrip>
        <TabSearch><ChevronDown size={18} strokeWidth={3} /></TabSearch>
        {tabs.map((tab, i) => (
          <Tab key={i} $active={tab.active} $sep={tab.sep || i === 5}>
            {tab.replit ? <ReplitIcon /> : <GlobeIcon />}
            <TabTitle $fade={!tab.replit}>{tab.title}</TabTitle>
            <TabClose $fade={!tab.replit}><X size={17} strokeWidth={2.2} /></TabClose>
          </Tab>
        ))}
        <NewTab><Plus size={20} strokeWidth={2.4} /></NewTab>
        <WindowControls>
          <WindowButton><Minus size={20} strokeWidth={1.8} /></WindowButton>
          <WindowButton><RestoreIcon /></WindowButton>
          <WindowButton><X size={22} strokeWidth={1.8} /></WindowButton>
        </WindowControls>
      </TabStrip>
      <Toolbar>
        <NavButton><ArrowLeft size={25} strokeWidth={2} /></NavButton>
        <NavButton $off><ArrowRight size={25} strokeWidth={2} /></NavButton>
        <NavButton><RotateCw size={23} strokeWidth={2} /></NavButton>
        <AddressBar>
          <TuneIcon />
          <Url>30156614-d4d9-49f4-acba-e1db6db77162-00-1mmgkg5rmixp9.janeway.replit.dev<span>/pos-enhanced</span></Url>
          <BarIcon><Key size={25} strokeWidth={2} style={{ transform: 'rotate(45deg)' }} /></BarIcon>
          <BarIcon><ZoomOut size={25} strokeWidth={2} /></BarIcon>
          <BarIcon><Star size={25} strokeWidth={2} /></BarIcon>
        </AddressBar>
        <Avatar>M</Avatar>
        <MenuDots><MoreVertical size={24} strokeWidth={2.4} /></MenuDots>
      </Toolbar>
    </>
  )
}

function PosPage() {
  return (
    <Page>
      <TopBar>
        <TopCell $w={313}>
          Cashier
          <CashierName><User size={15} />Admin User</CashierName>
          <LiveRow><LiveDot /><LiveText>Live Mode</LiveText>ID: N/A</LiveRow>
        </TopCell>
        <TopCell $w={624}>Customer</TopCell>
        <TopCell $w={300}>Contact &amp; GST</TopCell>
        <TopActions>
          <TopButton $w={95}><RotateCcw size={18} />Clear</TopButton>
          <TopButton $w={161} $primary><UserPlus size={18} />Add Customer</TopButton>
        </TopActions>
      </TopBar>
      <ScannerPanel>
        <ScannerHead>
          <ScannerIcon><Search size={14} /></ScannerIcon>
          <ScannerTitle>Product Search &amp; Barcode Scanner<small>Search products or scan barcodes for instant results</small></ScannerTitle>
          <ReadyPill><CircleCheckBig size={14} />Ready</ReadyPill>
        </ScannerHead>
        <ScannerInput>
          <Search size={14} color="#3b82f6" />
          <Scan size={14} color="#6b7280" />
          <ScannerHint>Search products by name, SKU or scan barcode</ScannerHint>
          <AddPill><Plus size={15} />Add</AddPill>
        </ScannerInput>
      </ScannerPanel>
      <MainRow>
        <Column>
          <CartBanner>
            <BannerIcon><ShoppingCart size={24} /></BannerIcon>
            <BannerText>Shopping Cart<small>Professional Point of Sale</small></BannerText>
          </CartBanner>
          <ProductCard>
            <ProductName>BLACK ULUNTHU (250g Pack)</ProductName>
            <ProductSku>12_250g</ProductSku>
            <SellPrice>Sell: ₹31</SellPrice>
            <ProductLine $color="#2563eb">Cost: ₹25</ProductLine>
            <ProductLine><s>MRP: ₹35</s><OffBadge>11% OFF</OffBadge></ProductLine>
            <ProductLine $color="#9333ea">Margin: ₹6(20%)</ProductLine>
            <BulkBadge>BULK</BulkBadge>
          </ProductCard>
          <StatusStrip>System Ready</StatusStrip>
        </Column>
        <Column>
          <StatsPanel>
            <StatLine $h={26} $color="#166534"><ReadyPill $tall>Ready</ReadyPill></StatLine>
            <StatLine $color="#2563eb">72</StatLine>
            <StatLine $color="#111827">113</StatLine>
            <StatsNote>Scanner accepts valid barcodes (8+ chars), stock, and pricing.</StatsNote>
          </StatsPanel>
          <GradientBanner />
          <ItemsPanel>
            <CountLine>1</CountLine>
            <CountLine>1</CountLine>
            <TotalBox>₹31</TotalBox>
            <DiscountRow><DiscountBox>0</DiscountBox><span>%</span></DiscountRow>
            <MiniRail>
              <Arrow $color="#a8a8a8" />
              <MiniThumb />
              <Arrow $down $color="#a8a8a8" />
            </MiniRail>
          </ItemsPanel>
          <AmountBox>
            <AmountTitle>Total Amount</AmountTitle>
            <AmountValue>₹31</AmountValue>
            <AmountLine>Items: 1 • Qty: 1</AmountLine>
            <AmountMargin><AmountProfit>Profit: ₹6 each</AmountProfit><ChartEmoji />Margin: 20%</AmountMargin>
          </AmountBox>
          <ActionButton $h={32} $mt={9} $bg="#2563eb" $color="#e5edff" $gap={24}><Package size={16} />Ocean Freight</ActionButton>
          <ActionButton $h={36} $mt={5} $bg="#16a34a" $color="#e5f7ec" $fs={15} $gap={22}><CreditCard size={18} />Proceed to Payment (F10)</ActionButton>
          <ActionButton $h={30} $mt={5} $bg="#fff" $line="#fecaca" $color="#dc2626" $gap={24}><Trash2 size={16} />Clear All</ActionButton>
          <ActionButton $h={30} $mt={5} $bg="#fff" $line="#e5e7eb" $color="#111827" $weight={500} $fs={13} $gap={16} $pl={16}><Printer size={16} />Print Receipt</ActionButton>
        </Column>
      </MainRow>
    </Page>
  )
}

function CustomerPanel() {
  return (
    <Panel $tone="purple">
      <PanelHeading $tone="purple" $gap={11}><User size={20} strokeWidth={2} color="#7e22ce" />Customer Search &amp; Selection</PanelHeading>
      <SearchWrap>
        <TextField $h={45} $pr={42} $fs={15} placeholder="Search: name, phone, email, ID (e.g., 'Am" />
        <Phone size={18} />
      </SearchWrap>
      <ExamplesTitle>Search Examples:</ExamplesTitle>
      <ExamplesGrid>
        <span>• Name: "Amit Patel"</span>
        <span>• Phone: "+91-9876543212"</span>
        <span>• Email: "amit@email.com"</span>
        <span>• ID: "3"</span>
      </ExamplesGrid>
      <VoiceBox>
        <strong>Voice Commands:</strong>
        "Find Amit Patel" or "Customer number three"
      </VoiceBox>
      <CustomerCard>
        <CustomerName>ARSHARTH S</CustomerName>
        <CustomerLine $h={24}>ID: 2</CustomerLine>
        <CustomerLine $h={22}><PhoneEmoji />9787002310</CustomerLine>
        <RemoveButton><X size={12} strokeWidth={2} /></RemoveButton>
      </CustomerCard>
      <PricingBox>
        <PricingRow>
          <DollarSign size={16} />
          <PricingLabel>Pricing Mode</PricingLabel>
          <Toggle>
            <ToggleOption><User size={18} />Retail</ToggleOption>
            <ToggleOption $active><Package size={18} />Wholesale</ToggleOption>
          </Toggle>
        </PricingRow>
        <PricingNote><ParcelEmoji />Bulk wholesale pricing for business customers</PricingNote>
      </PricingBox>
      <PanelDivider $tone="purple" $mt={19} />
      <OutlineButton $tone="green" $mt={14}><User size={17} />Demo: Setup Cart &amp; Customer</OutlineButton>
      <OutlineButton $tone="purple" $mt={9}><UserPlus size={17} />Add New Customer</OutlineButton>
    </Panel>
  )
}

function CartPanel() {
  return (
    <Panel $tone="orange">
      <PanelHeading $tone="orange" $gap={9}><ShoppingCart size={21} color="#9a3412" />Cart Items (1)</PanelHeading>
      <ItemCard>
        <ItemHead>
          <div>
            <ItemName>BLACK ULUNTHU (250g Pack)</ItemName>
            <ItemSku>SKU: 12_250g</ItemSku>
          </div>
          <TrashButton><Trash2 size={18} /></TrashButton>
        </ItemHead>
        <ItemGrid>
          <div>
            <SmallLabel>Quantity</SmallLabel>
            <QtyRow>
              <QtyButton $w={20}><Minus size={16} /></QtyButton>
              <TextField $h={35} $pr={29} $align="center" readOnly value="1" />
              <QtyButton $w={22}><Plus size={16} /></QtyButton>
            </QtyRow>
          </div>
          <PriceCell>
            <SmallLabel>Unit Price</SmallLabel>
            <TextField $h={36} readOnly value="31.25" />
          </PriceCell>
        </ItemGrid>
        <ItemDivider />
        <ItemTotal>Item Total:<b>₹31</b></ItemTotal>
      </ItemCard>
      <PanelDivider $tone="orange" $mt={19} />
      <Subtotal>Cart Subtotal:<span>₹31</span></Subtotal>
    </Panel>
  )
}

function ShippingPanel() {
  return (
    <Panel $tone="blue">
      <PanelHeading $tone="blue">Shipping Details</PanelHeading>
      <FieldLabel $mt={18}>Container Number</FieldLabel>
      <TextField $h={39.5} placeholder="e.g., ABCD1234567" />
      <FieldLabel $mt={18}>Vessel Name</FieldLabel>
      <TextField $h={39.5} placeholder="e.g., MSC Oscar" />
      <FieldGrid $mt={18} $gap={10}>
        <div>
          <FieldLabel>Port of Loading</FieldLabel>
          <TextField $h={39.5} placeholder="Shanghai, China" />
        </div>
        <div>
          <FieldLabel>Port of Discharge</FieldLabel>
          <TextField $h={39.5} placeholder="Mumbai, India" />
        </div>
      </FieldGrid>
    </Panel>
  )
}

function CostPanel() {
  return (
    <Panel $tone="green">
      <PanelHeading $tone="green">Cost Breakdown</PanelHeading>
      <FieldGrid $mt={19} $gap={15}>
        <div>
          <FieldLabel>Ocean Freight</FieldLabel>
          <TextField placeholder="0.00" />
        </div>
        <div>
          <FieldLabel>Marine Insurance</FieldLabel>
          <TextField placeholder="0.00" />
        </div>
      </FieldGrid>
      <FieldGrid $mt={18} $gap={15}>
        <div>
          <FieldLabel>Customs Duty</FieldLabel>
          <TextField $h={39.5} placeholder="0.00" />
        </div>
        <div>
          <FieldLabel>Handling Charges</FieldLabel>
          <TextField $h={39.5} placeholder="0.00" />
        </div>
      </FieldGrid>
    </Panel>
  )
}

function FreightModal() {
  return (
    <Modal>
      <ModalBody>
        <ModalTitle><Package size={25} />Ocean Freight Management &amp; Cart Editor</ModalTitle>
        <Columns>
          <CustomerPanel />
          <CartPanel />
          <Stack>
            <ShippingPanel />
            <CostPanel />
            <TotalCard $h={104} $bg="linear-gradient(135deg, #2563eb, #1d4ed8)">
              <TotalLabel $color="#dbeafe">Total Ocean Freight</TotalLabel>
              <TotalValue>₹0</TotalValue>
            </TotalCard>
            <TotalCard $h={104} $bg="linear-gradient(135deg, #16a34a, #15803d)">
              <TotalLabel $color="#dcfce7">Grand Total (Cart + Ocean)</TotalLabel>
            </TotalCard>
          </Stack>
        </Columns>
      </ModalBody>
      <CloseButton><X size={20} strokeWidth={1.8} /></CloseButton>
      <ScrollRail>
        <Arrow />
        <ScrollThumb />
        <Arrow $down />
      </ScrollRail>
    </Modal>
  )
}

function WinTaskbar() {
  return (
    <Taskbar>
      <WidgetSlot>
        <WeatherIcon />
        <CountBadge>9+</CountBadge>
      </WidgetSlot>
      {taskApps.map((app, i) => (
        <AppSlot key={i} $active={app.active}>
          {app.icon}
          {app.notify && <NotifyDot />}
          {(app.dot || app.active) && <AppDot $active={app.active} />}
        </AppSlot>
      ))}
      <Tray>
        <TraySlot $w={48}><ChevronDown size={24} strokeWidth={2} style={{ transform: 'rotate(180deg)' }} /></TraySlot>
        <TraySlot $w={48}><OneDriveOff /></TraySlot>
        <TraySlot $w={48}><TouchPad /></TraySlot>
        <TraySlot $w={36} $gap><Wifi /></TraySlot>
        <TraySlot $w={36}><Volume /></TraySlot>
        <TraySlot $w={36}><Battery /></TraySlot>
        <Clock>14:19<br />31-07-2025</Clock>
      </Tray>
    </Taskbar>
  )
}

export default function App() {
  return (
    <Screen>
      <GlobalStyle />
      <BrowserChrome />
      <Viewport>
        <PosPage />
        <Scrim />
        <FreightModal />
      </Viewport>
      <WinTaskbar />
    </Screen>
  )
}
